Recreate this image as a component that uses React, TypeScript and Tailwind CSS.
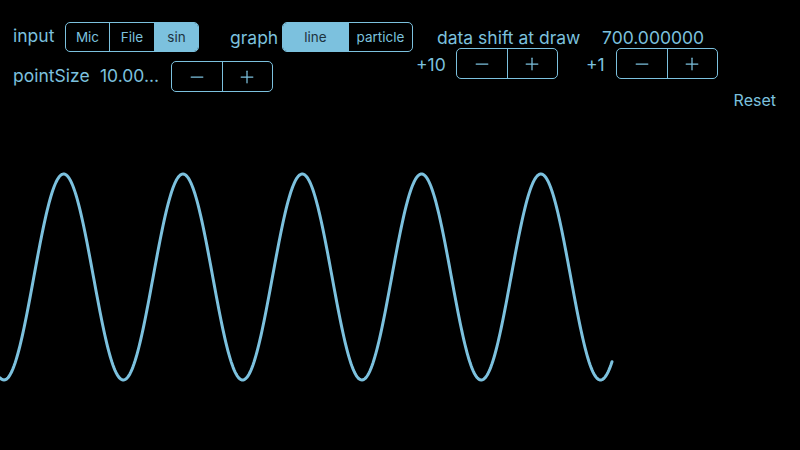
import { Minus, Plus } from 'lucide-react';

type Seg = { label: string; w: string; active?: boolean };

function Segmented({ items }: { items: Seg[] }) {
  return (
    <div className="flex h-[30px] rounded-[5px] border border-[#7cc1de] overflow-hidden">
      {items.map((it, i) => (
        <div
          key={it.label}
          className={`${it.w} flex items-center justify-center text-[13.5px] ${
            i > 0 ? 'border-l border-[#7cc1de]' : ''
          } ${it.active ? 'bg-[#7cc1de] text-[#1d3340]' : 'text-[#7cc1de]'}`}
        >
          {it.label}
        </div>
      ))}
    </div>
  );
}

function Stepper() {
  return (
    <div className="flex h-[31px] w-[102px] rounded-[5px] border border-[#7cc1de] text-[#7cc1de]">
      <div className="flex-1 flex items-center justify-center border-r border-[#7cc1de]">
        <Minus className="w-[20px] h-[20px]" strokeWidth={1.5} />
      </div>
      <div className="flex-1 flex items-center justify-center">
        <Plus className="w-[20px] h-[20px]" strokeWidth={1.5} />
      </div>
    </div>
  );
}

// sine wave points for the graph
function wavePath() {
  const pts: string[] = [];
  const period = 119.3;
  const center = 277 - 112;
  const amp = 103;
  for (let x = 0; x <= 612; x += 1) {
    const y = center + amp * Math.cos(((x - 4) / period) * 2 * Math.PI);
    pts.push(`${x === 0 ? 'M' : 'L'}${x},${y.toFixed(2)}`);
  }
  return pts.join(' ');
}

export default function App() {
  return (
    <div
      className="w-[800px] h-[450px] bg-black text-[#7cc1de] overflow-hidden"
      style={{ fontFamily: 'Inter, "Noto Sans", sans-serif' }}
    >
      {/* controls */}
      <div className="h-[112px] flex pt-[22px]">
        {/* input + pointSize */}
        <div className="flex flex-col pl-[13px]">
          <div className="flex items-center">
            <span className="text-[17.5px] w-[52px] -mt-[1px]">input</span>
            <Segmented
              items={[
                { label: 'Mic', w: 'w-[43px]' },
                { label: 'File', w: 'w-[45px]' },
                { label: 'sin', w: 'w-[44px]', active: true },
              ]}
            />
          </div>
          <div className="flex items-center mt-[9px]">
            <span className="text-[17.5px] w-[87px]">pointSize</span>
            <span className="text-[17.5px] w-[71px]">10.00...</span>
            <Stepper />
          </div>
        </div>
        {/* graph */}
        <div className="flex items-start ml-[-43px]">
          <span className="text-[17.5px] w-[52px] mt-[3px]">graph</span>
          <Segmented
            items={[
              { label: 'line', w: 'w-[65px]', active: true },
              { label: 'particle', w: 'w-[64px]' },
            ]}
          />
        </div>
        {/* data shift */}
        <div className="flex flex-col ml-[3px]">
          <div className="flex items-center text-[17.5px] pl-[21px] h-[30px] mt-[2px]">
            <span className="w-[165px] whitespace-nowrap">data shift at draw</span>
            <span>700.000000</span>
          </div>
          <div className="flex items-center -mt-[4px]">
            <span className="text-[17.5px] w-[40px] mt-[3px]">+10</span>
            <Stepper />
            <span className="text-[17.5px] w-[30px] ml-[28px] mt-[3px]">+1</span>
            <Stepper />
          </div>
          <div className="flex justify-end text-[16px] mt-[9px] -mr-[58px]">Reset</div>
        </div>
      </div>
      {/* graph canvas */}
      <svg width={800} height={338} className="block">
        <path
          d={wavePath()}
          fill="none"
          stroke="#7cc1de"
          strokeWidth={3}
          strokeLinecap="round"
          strokeLinejoin="round"
        />
      </svg>
    </div>
  );
}
